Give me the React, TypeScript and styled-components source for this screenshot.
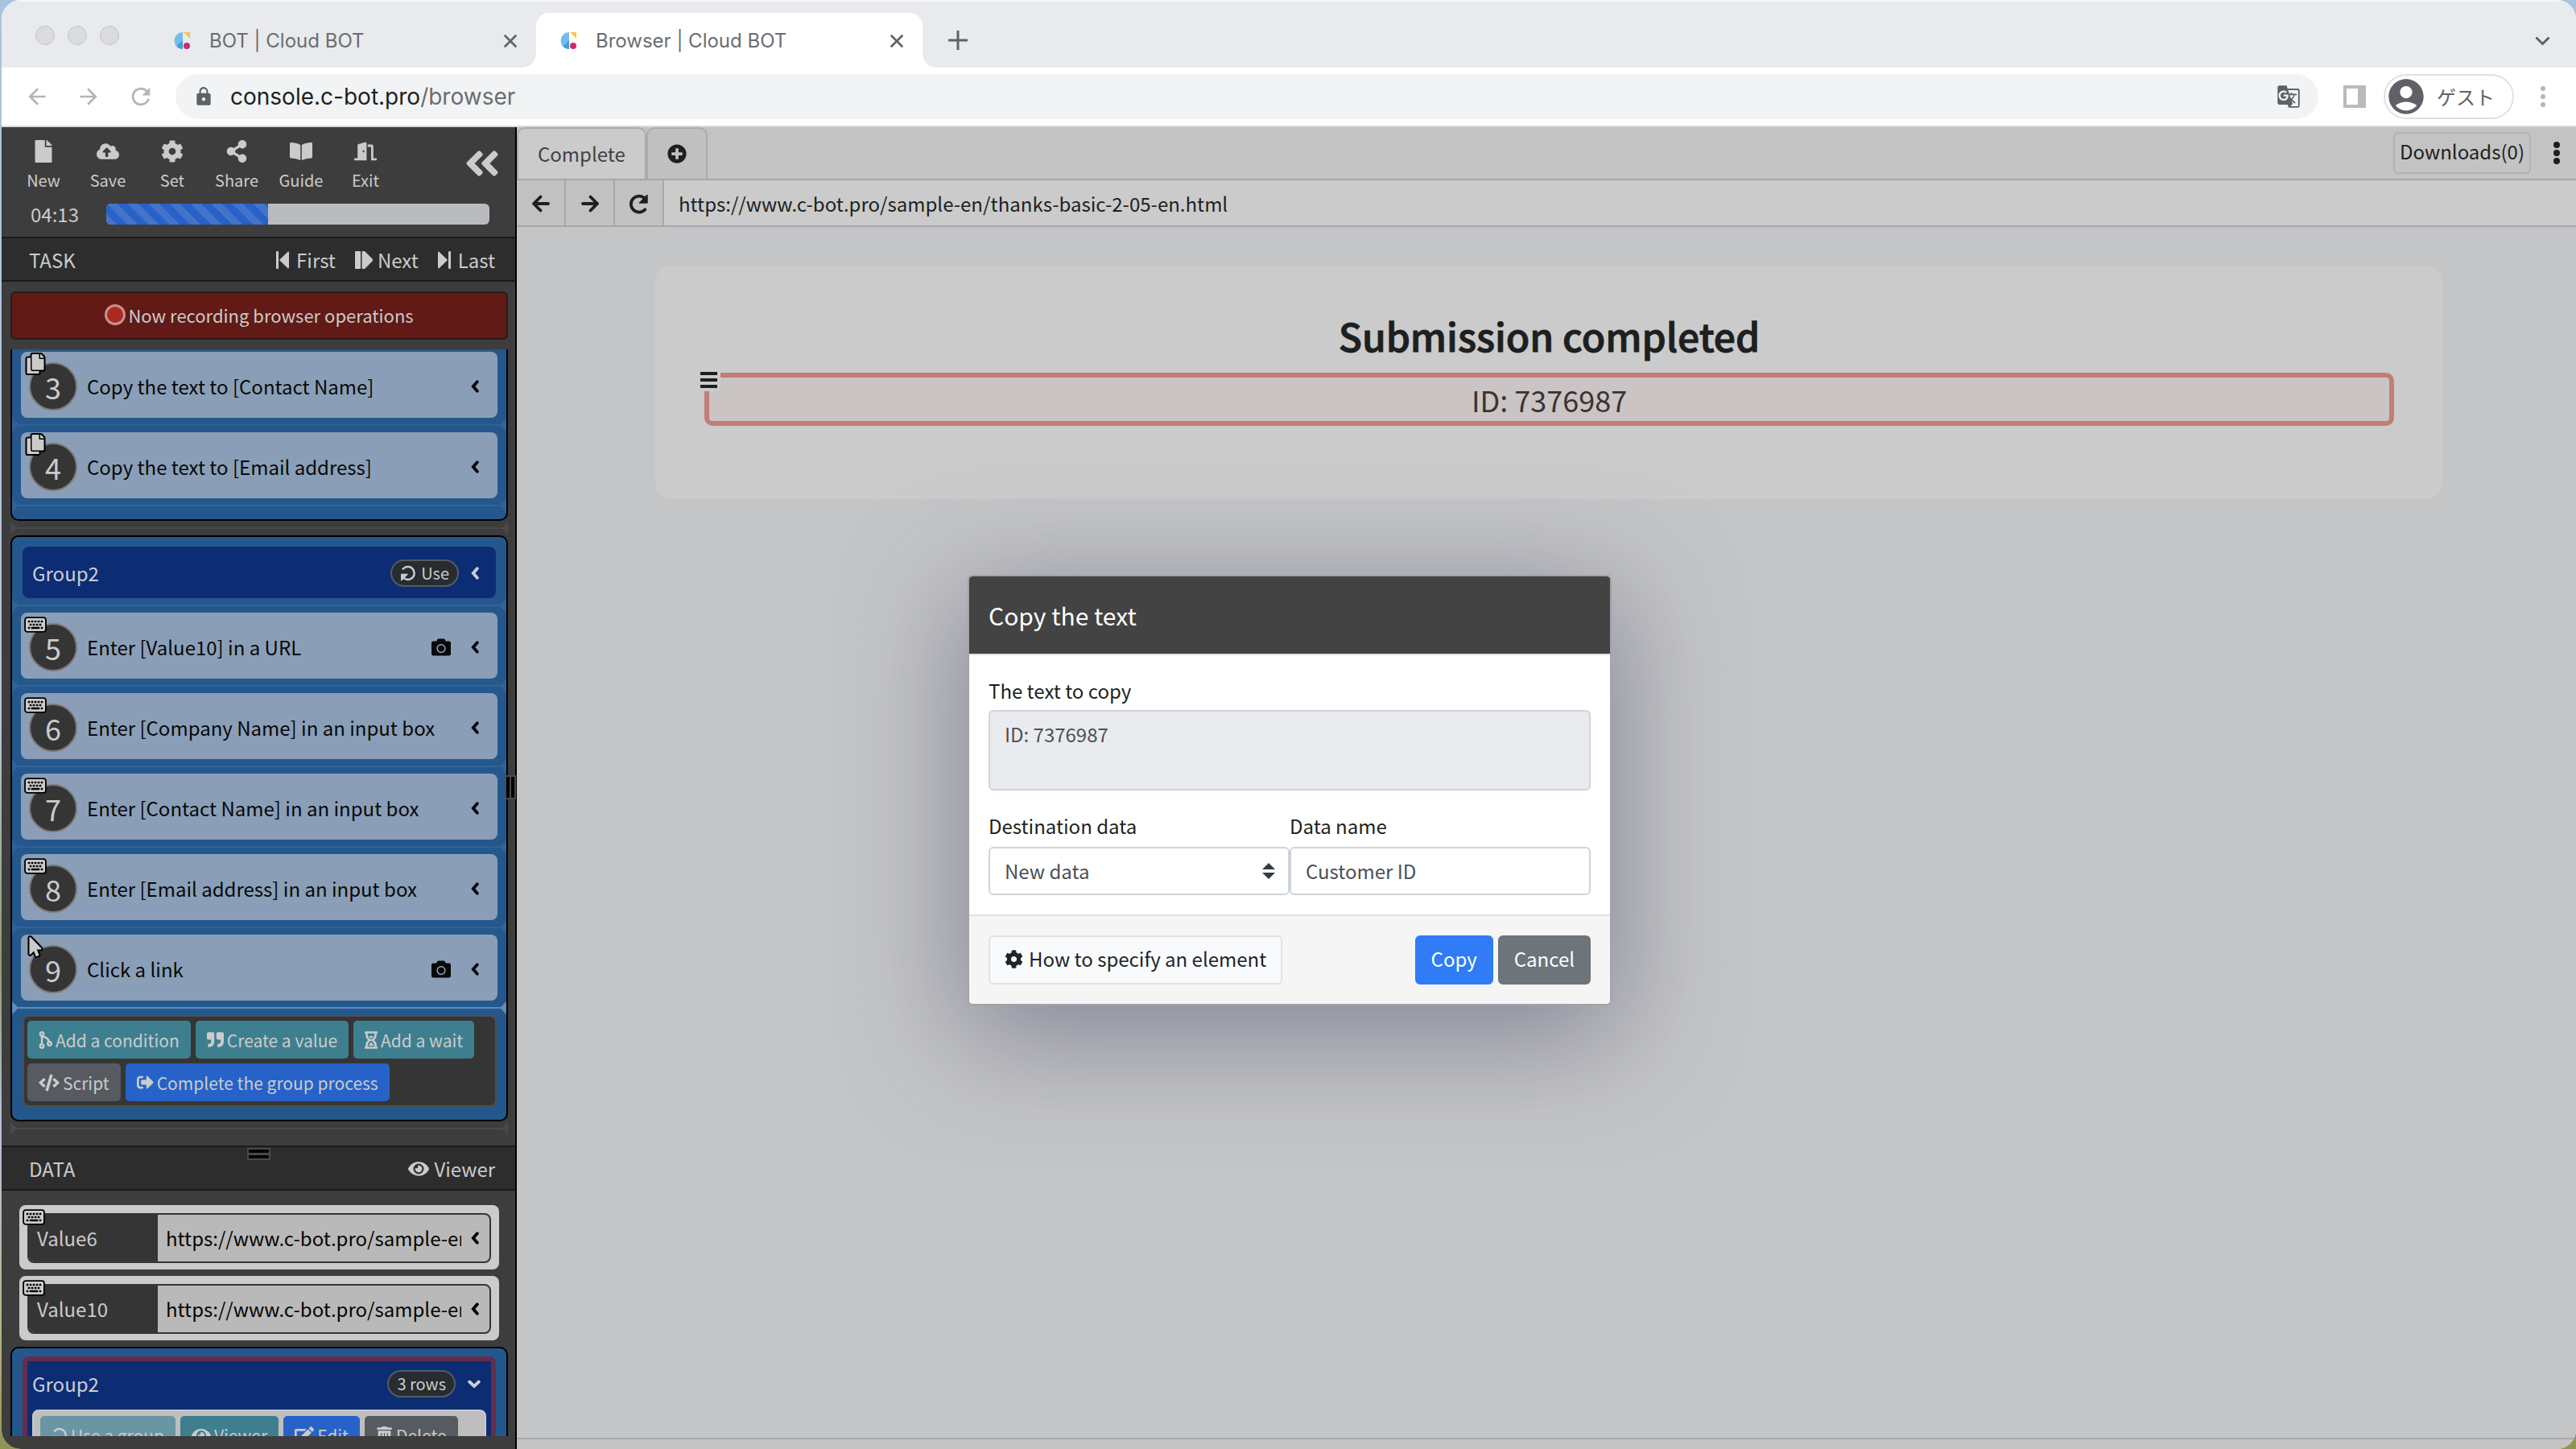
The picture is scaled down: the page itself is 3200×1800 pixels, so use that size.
import React from "react";
import styled, { createGlobalStyle, css } from "styled-components";
import {
  FaFile, FaCloudUploadAlt, FaCog, FaShareAlt, FaBookOpen, FaDoorOpen, FaAngleDoubleLeft,
  FaCopy, FaKeyboard, FaMousePointer, FaCamera, FaQuoteRight,
  FaCode, FaSignOutAlt, FaEye, FaEdit, FaTrashAlt, FaPlusCircle,
} from "react-icons/fa";
import { MdArrowBack, MdArrowForward, MdRefresh, MdLock, MdGTranslate, MdAccountCircle } from "react-icons/md";

const sans = `"Noto Sans CJK JP", "Noto Sans", sans-serif`;
const chromeFont = `Inter, "Noto Sans CJK JP", sans-serif`;

const GlobalStyle = createGlobalStyle`
  *, *::before, *::after { box-sizing: border-box; }
  body {
    margin: 0;
    background: linear-gradient(180deg, #a9c3df 0%, #b6c4d4 50%, #8f9a6c 66%, #b9bfe0 78%, #b5b383 92%, #8d9550 100%);
    font-family: ${sans};
    font-size: 24px;
    line-height: 36px;
    color: #1d1f21;
  }
  button, input, select, textarea { font: inherit; color: inherit; margin: 0; }
  button { background: none; border: 0; padding: 0; cursor: pointer; white-space: nowrap; }
  h1, h2, p { margin: 0; }
  svg { display: block; flex: none; }
`;

/* ---------- browser window ---------- */

const Window = styled.div`
  display: flex;
  flex-direction: column;
  height: 100vh;
  margin-left: 2px;
  border-radius: 24px;
  overflow: hidden;
  background: #fff;
`;
const TabStrip = styled.div`
  display: flex;
  align-items: flex-end;
  height: 84px;
  background: #e8eaed;
  border-top: 2px solid #f4f5f7;
  font-family: ${chromeFont};
  color: #6b6c70;
`;
const Lights = styled.div`
  display: flex;
  gap: 16px;
  align-self: center;
  padding: 2px 0 0 42px;
  width: 184px;
`;
const Light = styled.span`
  width: 24px;
  height: 24px;
  border-radius: 50%;
  background: #dadbdc;
  border: 1px solid #c3c4c6;
`;
const BrowserTab = styled.div<{ $active?: boolean }>`
  position: relative;
  display: flex;
  align-items: center;
  width: 480px;
  height: 68px;
  padding: 1px 24px 0 30px;
  border-radius: 16px 16px 0 0;
  background: ${(p) => (p.$active ? "#fff" : "transparent")};
  ${(p) =>
    p.$active &&
    css`
      &::before, &::after {
        content: "";
        position: absolute;
        bottom: 0;
        width: 16px;
        height: 16px;
      }
      &::before { left: -16px; background: radial-gradient(circle at 0 0, transparent 15px, #fff 16px); }
      &::after { right: -16px; background: radial-gradient(circle at 100% 0, transparent 15px, #fff 16px); }
    `}
`;
const TabTitle = styled.span`
  flex: 1;
  padding-left: 24px;
`;
const NewTab = styled.button`
  align-self: center;
  margin: 14px 0 0 32px;
`;
const TabSearch = styled.button`
  align-self: center;
  margin: 16px 32px 0 auto;
`;
const Toolbar = styled.div`
  display: flex;
  align-items: center;
  height: 74px;
  padding: 0 38px 0 28px;
  border-bottom: 2px solid #dadada;
  font-family: ${chromeFont};
`;
const ToolbarNav = styled.div`
  display: flex;
  gap: 32px;
  width: 188px;
  color: #b4b5b7;
`;
const Address = styled.div`
  display: flex;
  align-items: center;
  flex: 1;
  height: 56px;
  margin-right: 31px;
  padding: 0 22px;
  border-radius: 28px;
  background: #f1f3f4;
  color: #5f6166;
`;
const AddressText = styled.span`
  flex: 1;
  padding-left: 20px;
  font-size: 28px;
  color: #6b6c70;
`;
const Host = styled.span`
  color: #1d1f21;
`;
const Guest = styled.button`
  display: flex;
  align-items: center;
  gap: 12px;
  height: 56px;
  margin: 0 33px 0 22px;
  padding: 0 22px 0 0;
  border: 2px solid #e0e0e1;
  border-radius: 28px;
  color: #5f6166;
  font-family: "Noto Sans CJK JP", sans-serif;
`;
const Dots = styled.span<{ $size: number; $gap: number }>`
  display: flex;
  flex-direction: column;
  gap: ${(p) => p.$gap}px;
  i {
    width: ${(p) => p.$size}px;
    height: ${(p) => p.$size}px;
    border-radius: 50%;
    background: currentColor;
  }
`;
const IconButton = styled.button<{ $color?: string }>`
  color: ${(p) => p.$color || "inherit"};
`;

/* ---------- application ---------- */

const AppArea = styled.div`
  position: relative;
  display: flex;
  flex: 1;
  min-height: 0;
`;
const Sidebar = styled.aside`
  position: relative;
  display: flex;
  flex-direction: column;
  flex: 0 0 640px;
  padding-bottom: 16px;
  background: #3d3d3d;
  border-right: 2px solid #000;
  color: #cbcbcb;
`;
const SideHead = styled.div`
  padding: 16px 32px 10px 12px;
`;
const Tools = styled.div`
  display: flex;
`;
const Tool = styled.button`
  display: flex;
  flex-direction: column;
  align-items: center;
  gap: 8px;
  width: 80px;
  font-size: 20px;
  line-height: 28px;
`;
const Collapse = styled.button`
  align-self: flex-start;
  margin: 4px -16px 0 auto;
`;
const TimeRow = styled.div`
  display: flex;
  align-items: center;
  justify-content: space-between;
  margin-top: 10px;
  padding-left: 24px;
`;
const Progress = styled.div`
  width: 476px;
  height: 26px;
  border-radius: 6px;
  overflow: hidden;
  background: #babbbe;
`;
const ProgressFill = styled.div`
  height: 100%;
  background: linear-gradient(45deg, #4374c9 25%, #2662c8 25%, #2662c8 50%, #4374c9 50%, #4374c9 75%, #2662c8 75%) 0 0 / 26px 26px;
`;
const SectionBar = styled.div`
  position: relative;
  display: flex;
  align-items: center;
  flex: none;
  gap: 24px;
  height: 56px;
  padding: 2px 25px 0 34px;
  background: #2d2d2d;
  border: solid #1b1b1b;
  border-width: 2px 0;
`;
const SectionTitle = styled.h2`
  flex: 1;
  font-size: 24px;
  font-weight: 400;
`;
const StepButton = styled.button<{ $gap: number }>`
  display: flex;
  align-items: center;
  gap: ${(p) => p.$gap}px;
`;
const Grip = styled.span<{ $vertical?: boolean }>`
  position: absolute;
  display: block;
  border: solid #000;
  background: #4a4a4a;
  outline: 2px solid #4a4a4a;
  ${(p) =>
    p.$vertical
      ? css`right: 1px; top: 807px; width: 10px; height: 26px; border-width: 0 4px;`
      : css`left: 307px; top: 3px; width: 25px; height: 11px; border-width: 4px 0;`}
`;
const Recording = styled.div`
  display: flex;
  align-items: center;
  justify-content: center;
  gap: 3px;
  flex: none;
  height: 60px;
  margin: 12px 9px 12px 11px;
  padding-bottom: 2px;
  border: 2px solid #2a1b1b;
  border-radius: 6px;
  background: #611a15;
  font-size: 22px;
`;
const RecordDot = styled.span`
  width: 26px;
  height: 26px;
  border: 3px solid #c98f8b;
  border-radius: 50%;
  background: #ab2a24;
`;
const TaskList = styled.div`
  flex: none;
  padding: 0 9px 12px 11px;
`;
const Frame = styled.section<{ $first?: boolean }>`
  padding: 12px 11px 16px;
  border: 2px solid #000;
  border-radius: 10px;
  background: #24588d;
  ${(p) =>
    p.$first &&
    css`
      padding-top: 3px;
      padding-bottom: 8px;
      border-top: 0;
      border-radius: 0 0 10px 10px;
    `}
`;
const Divider = styled.div<{ $color: string; $bleed?: number }>`
  position: relative;
  height: 2px;
  margin: 8px ${(p) => -(p.$bleed || 0)}px;
  background: ${(p) => p.$color};
  &::before, &::after {
    content: "";
    position: absolute;
    top: -7px;
    border: solid transparent;
    border-width: 8px 0;
  }
  &::before { left: 0; border-left: 8px solid ${(p) => p.$color}; }
  &::after { right: 0; border-right: 8px solid ${(p) => p.$color}; }
`;
const GroupHead = styled.div`
  display: flex;
  align-items: center;
  height: 64px;
  margin: 0 2px;
  padding: 2px 21px 0 12px;
  border-radius: 8px;
  background: #0c2d74;
  color: #cbcfd8;
`;
const GroupName = styled.span`
  flex: 1;
`;
const Pill = styled.button`
  display: flex;
  align-items: center;
  gap: 6px;
  height: 34px;
  margin-right: 15px;
  padding: 0 10px;
  border: 2px solid #555b62;
  border-radius: 17px;
  background: #272c30;
  color: #cbcbcb;
  font-size: 20px;
  line-height: 30px;
`;
const TaskCard = styled.div`
  position: relative;
  display: flex;
  align-items: center;
  height: 82px;
  padding: 3px 23px 0 10px;
  border-radius: 8px;
  background: #8a9fb7;
  color: #070809;
`;
const StepNumber = styled.span`
  width: 60px;
  height: 60px;
  border: 2px solid #7e7877;
  border-radius: 50%;
  background: #353535;
  color: #cbcbcb;
  font-size: 36px;
  line-height: 56px;
  text-align: center;
`;
const TaskText = styled.span`
  flex: 1;
  padding-left: 12px;
  white-space: nowrap;
`;
const Badge = styled.span`
  position: absolute;
  left: 6px;
  top: 3px;
  color: #cbcbcb;
  svg {
    overflow: visible;
    stroke: #000;
    stroke-width: 88px;
    paint-order: stroke;
    stroke-linejoin: round;
  }
`;
const CardIcon = styled.span`
  margin-right: 25px;
`;
const ActionPanel = styled.div`
  display: flex;
  flex-wrap: wrap;
  gap: 6px;
  margin: 0 1px 0 2px;
  padding: 5px 4px;
  border: 2px solid #4f4f4f;
  border-radius: 8px;
  background: #353535;
`;
const tones = { teal: "#3e7f8f", mutedTeal: "#6a96a3", gray: "#565b61", blue: "#2662c8" };
const SmallButton = styled.button<{ $tone: keyof typeof tones }>`
  display: flex;
  align-items: center;
  gap: 4px;
  height: 47px;
  padding: 0 14px;
  border-radius: 5px;
  background: ${(p) => tones[p.$tone]};
  color: #cbcbcb;
  font-size: 21px;
`;
const DataList = styled.div`
  display: flex;
  flex-direction: column;
  gap: 8px;
  flex: 1;
  min-height: 0;
  overflow: hidden;
  padding: 18px 9px 0 11px;
`;
const ValueCard = styled.div`
  position: relative;
  flex: none;
  height: 80px;
  margin: 0 11px;
  padding: 10px 10px 8px;
  border-radius: 8px;
  background: #cbcbcb;
`;
const ValueRow = styled.div`
  display: flex;
  align-items: center;
  height: 62px;
  padding-right: 13px;
  border: 2px solid #353535;
  border-radius: 8px;
  background: #b9b9b9;
  color: #050505;
  overflow: hidden;
`;
const ValueLabel = styled.label`
  align-self: stretch;
  width: 160px;
  padding: 11px 0 0 10px;
  background: #353535;
  color: #cbcbcb;
`;
const ValueInput = styled.input`
  flex: 1;
  min-width: 0;
  margin: 0 12px 0 10px;
  padding: 0;
  border: 0;
  background: transparent;
  outline: 0;
`;
const DataFrame = styled(Frame)`
  flex: none;
  padding-top: 10px;
`;
const DataGroup = styled.div`
  margin: 0 2px;
  border: 6px solid #652c4c;
  border-radius: 8px;
  background: #0c2d74;
`;
const DataGroupHead = styled.div`
  display: flex;
  align-items: center;
  height: 60px;
  padding: 0 13px 4px 6px;
  color: #cbcfd8;
`;
const DataPanel = styled.div`
  display: flex;
  gap: 6px;
  margin: 0 6px;
  padding: 6px 8px;
  border: 2px solid #c8c8ca;
  border-radius: 8px;
  background: #bebebf;
`;

/* ---------- embedded browser ---------- */

const Main = styled.main`
  display: flex;
  flex-direction: column;
  flex: 1;
  min-width: 0;
  background: #c4c5c7;
`;
const InnerTabs = styled.div`
  display: flex;
  align-items: stretch;
  height: 66px;
  background: #c3c3c3;
  border-bottom: 2px solid #a7a7ab;
`;
const InnerTab = styled.button<{ $active?: boolean }>`
  padding: 0 24px;
  border: 2px solid #a9abae;
  border-bottom: 0;
  border-radius: 10px 10px 0 0;
  background: ${(p) => (p.$active ? "#cbcbcb" : "#c0c0c0")};
  color: ${(p) => (p.$active ? "#404246" : "#1d1f21")};
`;
const Downloads = styled.button`
  align-self: center;
  height: 52px;
  margin: 0 28px 0 auto;
  padding: 0 6px 4px;
  border: 2px solid #b0b1b5;
  border-radius: 6px;
`;
const MoreButton = styled.button`
  align-self: center;
  margin-right: 20px;
`;
const NavRow = styled.div`
  display: flex;
  height: 58px;
  border-bottom: 2px solid #a7a7ab;
  background: #cbcbcb;
`;
const NavButton = styled.button`
  display: grid;
  place-items: center;
  width: 61px;
  padding-top: 2px;
  border-right: 2px solid #a7a7ab;
  background: #c1c1c1;
`;
const UrlInput = styled.input`
  flex: 1;
  min-width: 0;
  padding: 2px 18px 0;
  border: 0;
  background: transparent;
  outline: 0;
`;
const Page = styled.div`
  flex: 1;
  padding: 48px 166px 0 172px;
`;
const ResultCard = styled.section`
  height: 290px;
  padding: 50px 60px 0 61px;
  border-radius: 20px;
  background: #cbcbcb;
  text-align: center;
`;
const ResultTitle = styled.h1`
  font-size: 48px;
  font-weight: 500;
  line-height: 72px;
  -webkit-text-stroke: 1px currentColor;
`;
const Highlight = styled.div`
  position: relative;
  height: 66px;
  margin-top: 11px;
  border: 6px solid #c27d78;
  border-radius: 10px;
  background: #cbc4c4;
  color: #3a3334;
  font-size: 36px;
  line-height: 54px;
`;
const HighlightMenu = styled.button`
  position: absolute;
  left: -15px;
  top: -11px;
  display: grid;
  gap: 4px;
  padding: 4px;
  background: #cbcbcb;
  i {
    width: 21px;
    height: 4px;
    background: #1d1f21;
  }
`;
const StatusBar = styled.div`
  height: 14px;
  border-top: 2px solid #a9aaad;
  background: #c3c3c3;
`;

/* ---------- dialog ---------- */

const Backdrop = styled.div`
  position: absolute;
  inset: 0;
  display: grid;
  place-items: center;
  padding: 4px 0 0 2px;
`;
const Dialog = styled.div`
  width: 796px;
  border-radius: 4px;
  background: #fff;
  outline: 2px solid #a3a3a6;
  box-shadow: 0 32px 140px 8px rgba(75, 75, 105, 0.52);
  overflow: hidden;
`;
const DialogHead = styled.h2`
  height: 98px;
  padding: 26px 24px 0;
  background: #434343;
  border-bottom: 2px solid #dee2e6;
  color: #fff;
  font-size: 30px;
  font-weight: 400;
  line-height: 44px;
`;
const DialogBody = styled.div`
  display: grid;
  grid-template-columns: 1fr 1fr;
  padding: 26px 24px 24px;
`;
const Field = styled.div<{ $wide?: boolean }>`
  display: flex;
  flex-direction: column;
  gap: 8px;
  ${(p) =>
    p.$wide &&
    css`
      gap: 6px;
      grid-column: 1 / -1;
      margin-bottom: 26px;
    `}
`;
const control = css`
  display: block;
  width: 100%;
  height: 60px;
  padding: 0 18px;
  border: 2px solid #ced4da;
  border-radius: 6px;
  background: #fff;
  color: #4b5056;
  outline: 0;
  appearance: none;
`;
const TextBox = styled.input`${control}`;
const Select = styled.select`${control}`;
const TextArea = styled.textarea`
  ${control}
  height: 100px;
  padding: 10px 18px;
  background: #e9ebef;
  resize: none;
`;
const SelectWrap = styled.div`
  position: relative;
  svg {
    position: absolute;
    right: 18px;
    top: 20px;
    pointer-events: none;
  }
`;
const DialogFoot = styled.div`
  display: flex;
  gap: 6px;
  padding: 24px;
  border-top: 2px solid #dee0e2;
  background: #f5f5f5;
`;
const variants = {
  light: css`margin-right: auto; background: #f9fafc; border-color: #e0e2e5; color: #212529;`,
  primary: css`background: #2f7cf6; border-color: #2f7cf6; color: #fff;`,
  secondary: css`background: #6d747a; border-color: #6d747a; color: #fff;`,
};
const DialogButton = styled.button<{ $variant: keyof typeof variants }>`
  display: flex;
  align-items: center;
  gap: 7px;
  height: 61px;
  padding: 0 18px 2px;
  border: 2px solid;
  border-radius: 6px;
  ${(p) => variants[p.$variant]}
`;

/* ---------- drawings ---------- */

const Favicon = () => (
  <svg width="20" height="21" viewBox="0 0 20 21">
    <path d="M11 0v21A10.500 10.500 0 0 1 11 0z" fill="#77bbe8" />
    <path d="M11 10v11A10 10 0 0 1 3.500 17.500z" fill="#3f9fd9" />
    <path d="M12 0h8v8z" fill="#f4c752" />
    <circle cx="16" cy="17" r="4" fill="#d02a6c" />
  </svg>
);
const Cross = () => (
  <svg width="16" height="16" viewBox="0 0 16 16" stroke="#5f6166" strokeWidth="2.600" strokeLinecap="round">
    <path d="M1.500 1.500l13 13M14.500 1.500l-13 13" />
  </svg>
);
const Plus = () => (
  <svg width="24" height="24" viewBox="0 0 24 24" stroke="#5f6166" strokeWidth="3">
    <path d="M12 0v24M0 12h24" />
  </svg>
);
const ChevronDown = () => (
  <svg width="19" height="12" viewBox="0 0 19 12" fill="none" stroke="#5f6166" strokeWidth="3">
    <path d="M1.500 1.500l8 8 8-8" />
  </svg>
);
const AngleLeft = () => (
  <svg width="10" height="16" viewBox="0 0 10 16" fill="none" stroke="currentColor" strokeWidth="3.800" strokeLinecap="round" strokeLinejoin="miter">
    <path d="M7.800 2.200L2.800 8l5 5.800" />
  </svg>
);
const AngleDown = () => (
  <svg width="16" height="11" viewBox="0 0 16 11" fill="none" stroke="currentColor" strokeWidth="3.800" strokeLinecap="round">
    <path d="M2.200 2.500L8 8l5.800-5.500" />
  </svg>
);
const SidePanel = () => (
  <svg width="28" height="28" viewBox="0 0 28 28">
    <path fill="#b9babc" fillRule="evenodd" d="M0 0h28v28H0zM4 4v20h14V4z" />
  </svg>
);
const Reload = ({ size, flip }: { size: number; flip?: boolean }) => (
  <svg width={size} height={size} viewBox="0 0 24 24" fill="none">
    <g transform={flip ? "rotate(180 12 12)" : undefined}>
      <path d="M19.500 18.500A9.600 9.600 0 1 1 19.800 6" stroke="currentColor" strokeWidth={flip ? 3 : 3.6} strokeLinecap="round" />
      <path d="M22 1.500v9h-9z" fill="currentColor" stroke="currentColor" strokeWidth="1.500" strokeLinejoin="round" />
    </g>
  </svg>
);
const Arrow = ({ right }: { right?: boolean }) => (
  <svg width="22" height="22" viewBox="0 0 22 22" fill="none" stroke="currentColor" strokeWidth="3.800" strokeLinecap="round" strokeLinejoin="round">
    <path d={right ? "M2 11h17.500M11.500 2.500l8.500 8.500-8.500 8.500" : "M20 11H2.500M10.500 2.500L2 11l8.500 8.500"} />
  </svg>
);
const FirstIcon = () => (
  <svg width="16" height="22" viewBox="0 0 16 22" fill="currentColor">
    <rect width="3" height="22" rx="1" />
    <path d="M4 11L14.500.800Q16 0 16 2v18q0 2-1.500 1.200z" />
  </svg>
);
const LastIcon = () => (
  <svg width="16" height="22" viewBox="0 0 16 22" fill="currentColor">
    <rect x="13" width="3" height="22" rx="1" />
    <path d="M12 11L1.500.800Q0 0 0 2v18q0 2 1.500 1.200z" />
  </svg>
);
const NextIcon = () => (
  <svg width="22" height="22" viewBox="0 0 22 22" fill="currentColor">
    <rect width="7" height="22" rx="1" />
    <path d="M8.500 1q0-1 1-1h2.500l9.500 9.500q1 1.500 0 3L12 22H9.500q-1 0-1-1z" />
  </svg>
);
const BranchIcon = () => (
  <svg width="17" height="22" viewBox="0 0 17 22" fill="none" stroke="currentColor" strokeWidth="2.400">
    <circle cx="4" cy="3.500" r="2.200" />
    <circle cx="4" cy="18.500" r="2.200" />
    <circle cx="13.500" cy="15.500" r="2.200" />
    <path d="M4 6v10M5 7q6 0 8 6" />
  </svg>
);
const HourglassIcon = () => (
  <svg width="16" height="22" viewBox="0 0 16 22" fill="none" stroke="currentColor" strokeWidth="2.600">
    <path d="M0 1.500h16M0 20.500h16" />
    <path d="M2.500 2v3q0 3.500 4 6-4 2.500-4 6v3M13.500 2v3q0 3.500-4 6 4 2.500 4 6v3" />
    <path d="M5 6h6L8 9.500zM8 13.500l3.500 4.500h-7z" fill="currentColor" stroke="none" />
  </svg>
);
const SortIcon = () => (
  <svg width="16" height="20" viewBox="0 0 16 20" fill="#343a40">
    <path d="M8 0l8 8H0zM8 20l8-8H0z" />
  </svg>
);

/* ---------- data ---------- */

type Task = { no: number; text: string; kind: "copy" | "key" | "click"; camera?: boolean };

const firstGroup: Task[] = [
  { no: 3, text: "Copy the text to [Contact Name]", kind: "copy" },
  { no: 4, text: "Copy the text to [Email address]", kind: "copy" },
];
const secondGroup: Task[] = [
  { no: 5, text: "Enter [Value10] in a URL", kind: "key", camera: true },
  { no: 6, text: "Enter [Company Name] in an input box", kind: "key" },
  { no: 7, text: "Enter [Contact Name] in an input box", kind: "key" },
  { no: 8, text: "Enter [Email address] in an input box", kind: "key" },
  { no: 9, text: "Click a link", kind: "click", camera: true },
];
const tools = [
  { label: "New", icon: <FaFile size={28} /> },
  { label: "Save", icon: <FaCloudUploadAlt size={28} /> },
  { label: "Set", icon: <FaCog size={28} /> },
  { label: "Share", icon: <FaShareAlt size={28} /> },
  { label: "Guide", icon: <FaBookOpen size={28} /> },
  { label: "Exit", icon: <FaDoorOpen size={28} /> },
];
const kindIcons = {
  copy: <FaCopy size={24} />,
  key: <FaKeyboard size={24} />,
  click: <FaMousePointer size={24} />,
};

function TaskRow({ task }: { task: Task }) {
  return (
    <TaskCard>
      <StepNumber>{task.no}</StepNumber>
      <Badge>{kindIcons[task.kind]}</Badge>
      <TaskText>{task.text}</TaskText>
      {task.camera && <CardIcon><FaCamera size={24} /></CardIcon>}
      <IconButton aria-label="Expand"><AngleLeft /></IconButton>
    </TaskCard>
  );
}

function ValueItem({ name }: { name: string }) {
  return (
    <ValueCard>
      <Badge>{kindIcons.key}</Badge>
      <ValueRow>
        <ValueLabel htmlFor={name}>{name}</ValueLabel>
        <ValueInput id={name} readOnly defaultValue="https://www.c-bot.pro/sample-en/" />
        <IconButton aria-label="Expand"><AngleLeft /></IconButton>
      </ValueRow>
    </ValueCard>
  );
}

export default function App() {
  return (
    <>
      <GlobalStyle />
      <Window>
        <TabStrip>
          <Lights><Light /><Light /><Light /></Lights>
          <BrowserTab>
            <Favicon />
            <TabTitle>BOT | Cloud BOT</TabTitle>
            <IconButton aria-label="Close tab"><Cross /></IconButton>
          </BrowserTab>
          <BrowserTab $active>
            <Favicon />
            <TabTitle>Browser | Cloud BOT</TabTitle>
            <IconButton aria-label="Close tab"><Cross /></IconButton>
          </BrowserTab>
          <NewTab aria-label="New tab"><Plus /></NewTab>
          <TabSearch aria-label="Search tabs"><ChevronDown /></TabSearch>
        </TabStrip>
        <Toolbar>
          <ToolbarNav>
            <IconButton aria-label="Back"><MdArrowBack size={32} /></IconButton>
            <IconButton aria-label="Forward"><MdArrowForward size={32} /></IconButton>
            <IconButton aria-label="Reload"><MdRefresh size={34} /></IconButton>
          </ToolbarNav>
          <Address>
            <MdLock size={26} />
            <AddressText><Host>console.c-bot.pro</Host>/browser</AddressText>
            <MdGTranslate size={30} />
          </Address>
          <IconButton aria-label="Side panel"><SidePanel /></IconButton>
          <Guest><MdAccountCircle size={52} />ゲスト</Guest>
          <IconButton aria-label="Menu" $color="#b4b5b7"><Dots $size={6} $gap={4}><i /><i /><i /></Dots></IconButton>
        </Toolbar>

        <AppArea>
          <Sidebar>
            <SideHead>
              <Tools>
                {tools.map((t) => <Tool key={t.label}>{t.icon}{t.label}</Tool>)}
                <Collapse aria-label="Collapse"><FaAngleDoubleLeft size={50} /></Collapse>
              </Tools>
              <TimeRow>
                <span>04:13</span>
                <Progress><ProgressFill style={{ width: "42.200%" }} /></Progress>
              </TimeRow>
            </SideHead>
            <SectionBar>
              <SectionTitle>TASK</SectionTitle>
              <StepButton $gap={9}><FirstIcon />First</StepButton>
              <StepButton $gap={6}><NextIcon />Next</StepButton>
              <StepButton $gap={9}><LastIcon />Last</StepButton>
            </SectionBar>
            <Recording><RecordDot />Now recording browser operations</Recording>
            <TaskList>
              <Frame $first>
                {firstGroup.map((t) => (
                  <React.Fragment key={t.no}>
                    <TaskRow task={t} />
                    <Divider $color="#326297" $bleed={11} />
                  </React.Fragment>
                ))}
              </Frame>
              <Divider $color="#494949" />
              <Frame>
                <GroupHead>
                  <GroupName>Group2</GroupName>
                  <Pill><Reload size={20} flip />Use</Pill>
                  <IconButton aria-label="Expand"><AngleLeft /></IconButton>
                </GroupHead>
                <Divider $color="#326297" $bleed={11} />
                {secondGroup.map((t) => (
                  <React.Fragment key={t.no}>
                    <TaskRow task={t} />
                    <Divider $color={t.no === 9 ? "#608bbb" : "#326297"} $bleed={11} />
                  </React.Fragment>
                ))}
                <ActionPanel>
                  <SmallButton $tone="teal"><BranchIcon />Add a condition</SmallButton>
                  <SmallButton $tone="teal"><FaQuoteRight size={21} />Create a value</SmallButton>
                  <SmallButton $tone="teal"><HourglassIcon />Add a wait</SmallButton>
                  <SmallButton $tone="gray"><FaCode size={26} />Script</SmallButton>
                  <SmallButton $tone="blue"><FaSignOutAlt size={21} />Complete the group process</SmallButton>
                </ActionPanel>
              </Frame>
              <Divider $color="#494949" />
            </TaskList>
            <SectionBar>
              <SectionTitle>DATA</SectionTitle>
              <StepButton $gap={6}><FaEye size={26} />Viewer</StepButton>
              <Grip />
            </SectionBar>
            <DataList>
              <ValueItem name="Value6" />
              <ValueItem name="Value10" />
              <DataFrame>
                <DataGroup>
                  <DataGroupHead>
                    <GroupName>Group2</GroupName>
                    <Pill>3 rows</Pill>
                    <IconButton aria-label="Collapse group"><AngleDown /></IconButton>
                  </DataGroupHead>
                  <DataPanel>
                    <SmallButton $tone="mutedTeal"><Reload size={20} flip />Use a group</SmallButton>
                    <SmallButton $tone="teal"><FaEye size={24} />Viewer</SmallButton>
                    <SmallButton $tone="blue"><FaEdit size={24} />Edit</SmallButton>
                    <SmallButton $tone="gray"><FaTrashAlt size={21} />Delete</SmallButton>
                  </DataPanel>
                </DataGroup>
              </DataFrame>
            </DataList>
            <Grip $vertical />
          </Sidebar>

          <Main>
            <InnerTabs>
              <InnerTab $active>Complete</InnerTab>
              <InnerTab aria-label="Add tab"><FaPlusCircle size={24} /></InnerTab>
              <Downloads>Downloads(0)</Downloads>
              <MoreButton aria-label="More"><Dots $size={8} $gap={2}><i /><i /><i /></Dots></MoreButton>
            </InnerTabs>
            <NavRow>
              <NavButton aria-label="Back"><Arrow /></NavButton>
              <NavButton aria-label="Forward"><Arrow right /></NavButton>
              <NavButton aria-label="Reload"><Reload size={25} /></NavButton>
              <UrlInput aria-label="Page address" readOnly defaultValue="https://www.c-bot.pro/sample-en/thanks-basic-2-05-en.html" />
            </NavRow>
            <Page>
              <ResultCard>
                <ResultTitle>Submission completed</ResultTitle>
                <Highlight>
                  <HighlightMenu aria-label="Element menu"><i /><i /><i /></HighlightMenu>
                  ID: 7376987
                </Highlight>
              </ResultCard>
            </Page>
            <StatusBar />
          </Main>

          <Backdrop>
            <Dialog role="dialog" aria-labelledby="dialog-title">
              <DialogHead id="dialog-title">Copy the text</DialogHead>
              <DialogBody>
                <Field $wide>
                  <label htmlFor="source">The text to copy</label>
                  <TextArea id="source" readOnly defaultValue="ID: 7376987" />
                </Field>
                <Field>
                  <label htmlFor="destination">Destination data</label>
                  <SelectWrap>
                    <Select id="destination"><option>New data</option></Select>
                    <SortIcon />
                  </SelectWrap>
                </Field>
                <Field>
                  <label htmlFor="data-name">Data name</label>
                  <TextBox id="data-name" defaultValue="Customer ID" />
                </Field>
              </DialogBody>
              <DialogFoot>
                <DialogButton $variant="light"><FaCog size={23} />How to specify an element</DialogButton>
                <DialogButton $variant="primary">Copy</DialogButton>
                <DialogButton $variant="secondary">Cancel</DialogButton>
              </DialogFoot>
            </Dialog>
          </Backdrop>
        </AppArea>
      </Window>
    </>
  );
}
